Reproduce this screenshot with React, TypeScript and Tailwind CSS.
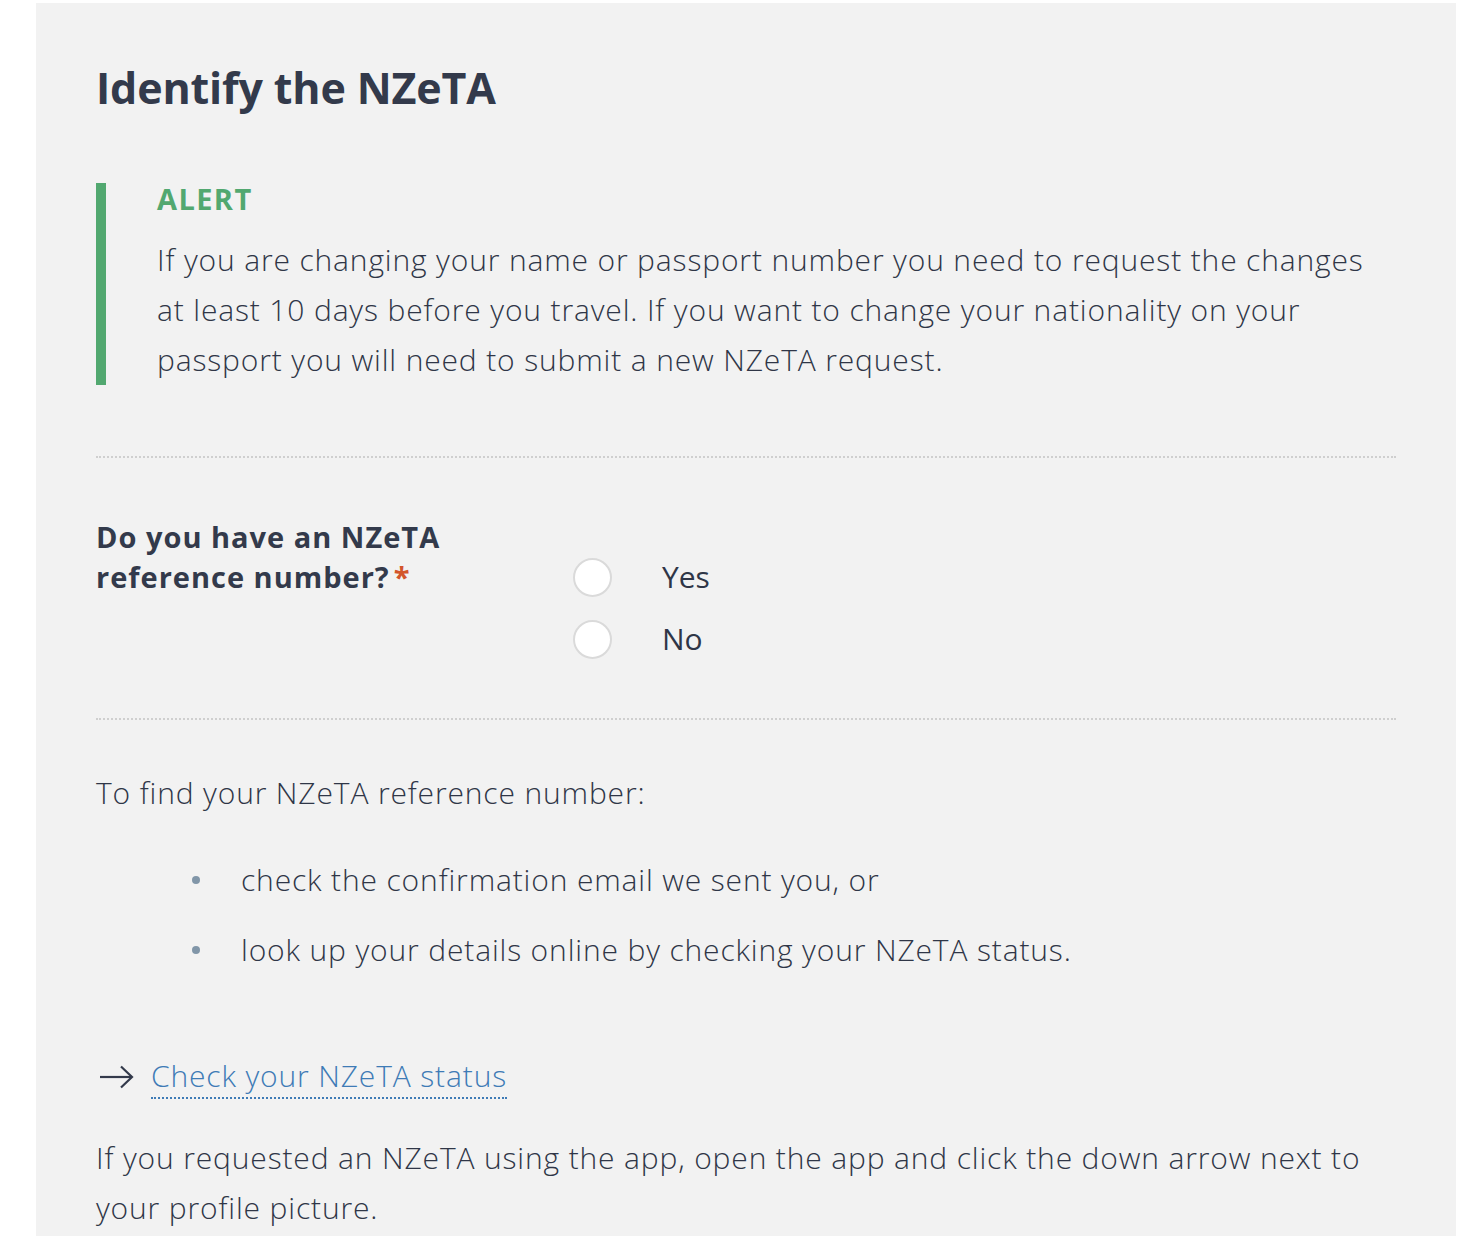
import React from "react";

const body = "font-['Open_Sans',_'Noto_Sans',_sans-serif]";

export default function App() {
  return (
    <div className={`min-h-[1236px] bg-white pl-[36px] pr-[20px] pt-[3px] ${body}`}>
      <div className="min-h-[1233px] bg-[#f2f2f2] px-[60px] pt-[58px] pb-[20px] text-[#2f3647]">
        <h1 className="text-[43px] font-bold leading-[53px] tracking-[-0.15px] text-[#333a4b]">
          Identify the NZeTA
        </h1>

        <div className="mt-[69px] border-l-[10px] border-[#52a870] pl-[51px]">
          <div className="text-[29px] font-bold leading-[32px] tracking-[1.4px] text-[#52a870]">ALERT</div>
          <p className="mt-[20px] text-[30px] font-light leading-[50px] tracking-[0.85px]">
            If you are changing your name or passport number you need to request the changes
            <br />
            at least 10 days before you travel. If you want to change your nationality on your
            <br />
            passport you will need to submit a new NZeTA request.
          </p>
        </div>

        <div className="mt-[71px] border-t-2 border-dotted border-[#cfcfcf]" />

        <div className="mt-[59px] flex">
          <div className="w-[477px] text-[29px] font-bold leading-[40px] tracking-[1px] text-[#333a4b]">
            Do you have an NZeTA
            <br />
            reference number?<span className="ml-[4px] text-[#d3552b]">*</span>
          </div>
          <div className="mt-[29px] flex flex-col">
            {["Yes", "No"].map((v) => (
              <label key={v} className="flex h-[62px] items-center">
                <span className="h-[39px] w-[39px] rounded-full border-2 border-[#dadada] bg-white" />
                <span className="ml-[50px] -translate-y-[1px] text-[30px] font-normal">{v}</span>
              </label>
            ))}
          </div>
        </div>

        <div className="mt-[48px] border-t-2 border-dotted border-[#cfcfcf]" />

        <p className="mt-[48px] text-[30px] font-light leading-[50px] tracking-[0.85px]">
          To find your NZeTA reference number:
        </p>

        <ul className="mt-[37px] flex flex-col gap-[20px] pl-[145px]">
          {[
            "check the confirmation email we sent you, or",
            "look up your details online by checking your NZeTA status.",
          ].map((t) => (
            <li key={t} className="relative text-[30px] font-light leading-[50px] tracking-[0.85px]">
              <span className="absolute left-[-49px] top-[21px] h-[8px] w-[8px] rounded-full bg-[#8196a8]" />
              {t}
            </li>
          ))}
        </ul>

        <div className="mt-[80px] flex items-center text-[30px] font-light leading-[50px] tracking-[0.85px]">
          <svg width="36" height="24" viewBox="0 0 36 24" className="ml-[3px] mr-[16px]" fill="none" stroke="#333a4b" strokeWidth="2.2">
            <path d="M1 12 H33" />
            <path d="M22 1.5 L33 12 L22 22.5" />
          </svg>
          <a href="#" className="border-b-2 border-dotted border-[#3e7bb6] leading-[42px] text-[#3e7bb6]">
            Check your NZeTA status
          </a>
        </div>

        <p className="mt-[34px] text-[30px] font-light leading-[50px] tracking-[0.85px]">
          If you requested an NZeTA using the app, open the app and click the down arrow next to
          <br />
          your profile picture.
        </p>
      </div>
    </div>
  );
}
